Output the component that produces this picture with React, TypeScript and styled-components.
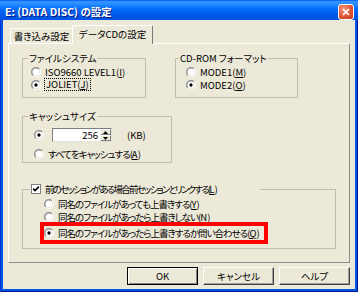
import React from "react";
import styled, { createGlobalStyle } from "styled-components";

const Global = createGlobalStyle`
  html, body { margin: 0; padding: 0; background: #ffffff; }
  body {
    font-family: "Noto Sans CJK JP", "Liberation Sans", sans-serif;
    font-feature-settings: "palt";
    color: #000;
  }
`;

const Window = styled.div`
  width: 358px;
  height: 292px;
  display: flex;
  flex-direction: column;
  background: #0055e5;
  overflow: hidden;
`;

const TitleBar = styled.div`
  height: 20px;
  flex: none;
  display: flex;
  align-items: center;
  justify-content: space-between;
  padding: 0 4px 0 5px;
  background: linear-gradient(
    #0058ee 0%,
    #3593ff 8%,
    #288eff 20%,
    #127dff 32%,
    #036ffc 45%,
    #0262ee 60%,
    #0057e5 75%,
    #0054e3 100%
  );
`;

const TitleText = styled.span`
  color: #fff;
  font-weight: bold;
  font-size: 10.5px;
  line-height: 12px;
  padding-top: 3px;
  text-shadow: 1px 1px #0a1883;
`;

const CloseButton = styled.div`
  width: 16px;
  height: 16px;
  box-sizing: border-box;
  margin-top: 3px;
  border: 1px solid #fff;
  border-radius: 3px;
  background: radial-gradient(circle at 35% 30%, #f39b82 0%, #e35d3d 45%, #c13b19 100%);
  display: flex;
  align-items: center;
  justify-content: center;
`;

const Frame = styled.div`
  flex: 1;
  display: flex;
  padding: 0 3px 3px 3px;
  box-shadow: inset 1px 0 #0831d9, inset -1px 0 #00138c, inset 0 -1px #00138c;
`;

const Body = styled.div`
  flex: 1;
  display: flex;
  flex-direction: column;
  background: #ece9d8;
  padding: 5px 5px 0 5px;
`;

const TabRow = styled.div`
  height: 18px;
  display: flex;
  align-items: flex-end;
  padding-left: 2px;
`;

const Tab = styled.div<{ $active?: boolean }>`
  box-sizing: border-box;
  width: ${(p) => (p.$active ? 81 : 63)}px;
  height: ${(p) => (p.$active ? 19 : 15)}px;
  margin-left: ${(p) => (p.$active ? -1 : 0)}px;
  margin-bottom: ${(p) => (p.$active ? -1 : 0)}px;
  position: relative;
  z-index: ${(p) => (p.$active ? 2 : 0)};
  background: #ece9d8;
  border-top: 1px solid #fff;
  border-left: 1px solid #fff;
  border-right: 1px solid ${(p) => (p.$active ? "#7a7a7a" : "#a0a0a0")};
  border-radius: 2px 2px 0 0;
  font-size: 9.5px;
  line-height: 12px;
  display: flex;
  justify-content: center;
  align-items: ${(p) => (p.$active ? "center" : "flex-end")};
  padding-bottom: ${(p) => (p.$active ? 2 : 1)}px;
`;

const Panel = styled.div`
  box-sizing: border-box;
  height: 220px;
  position: relative;
  z-index: 1;
  border: 1px solid;
  border-color: #fff #8c8c8c #8c8c8c #fff;
  padding: 8px 0 0 13px;
  display: flex;
  flex-direction: column;
`;

const GroupRow = styled.div`
  display: flex;
  gap: 29px;
`;

const Group = styled.fieldset<{ $w: number; $mt?: number }>`
  box-sizing: border-box;
  width: ${(p) => p.$w}px;
  min-width: 0;
  margin: ${(p) => p.$mt ?? 0}px 0 0 0;
  padding: 0;
  border: 1px solid #bdbdb1;
`;

const Legend = styled.legend<{ $ml: number; $w?: number }>`
  margin-left: ${(p) => p.$ml}px;
  padding: 0 1px;
  height: 12px;
  ${(p) => (p.$w ? `width: ${p.$w}px; box-sizing: border-box;` : "")}
  font-size: 9.5px;
  line-height: 12px;
  white-space: nowrap;
  display: flex;
  align-items: center;
  gap: 4px;
`;

const Content = styled.div<{ $pt: number; $pb: number; $pl: number; $gap?: number }>`
  display: flex;
  flex-direction: column;
  gap: ${(p) => p.$gap ?? 0}px;
  padding: ${(p) => p.$pt}px 0 ${(p) => p.$pb}px ${(p) => p.$pl}px;
`;

const OptionRow = styled.div<{ $gap?: number; $h?: number }>`
  display: flex;
  align-items: center;
  height: ${(p) => p.$h ?? 13}px;
  gap: ${(p) => p.$gap ?? 4}px;
  font-size: 9.5px;
  line-height: 12px;
  white-space: nowrap;
`;

const Jp = styled.span<{ $ls?: number }>`
  letter-spacing: ${(p) => p.$ls ?? -1}px;
  & u {
    letter-spacing: 0;
  }
`;

const Focus = styled.span`
  outline: 1px dotted #000;
  outline-offset: 0;
  padding: 0 1px;
  line-height: 11px;
`;

const SpinBox = styled.div`
  display: flex;
  width: 60px;
  height: 14px;
  box-sizing: border-box;
  border: 1px solid;
  border-color: #7f7f7f #e4e2d8 #e4e2d8 #7f7f7f;
  background: #fff;
`;

const SpinField = styled.div`
  flex: 1;
  text-align: right;
  padding-right: 2px;
  font-size: 9.5px;
  line-height: 12px;
`;

const SpinButtons = styled.div`
  width: 11px;
  display: flex;
  flex-direction: column;
`;

const SpinHalf = styled.div`
  flex: 1;
  box-sizing: border-box;
  background: #ece9d8;
  border: 1px solid;
  border-color: #fff #808080 #808080 #fff;
  display: flex;
  align-items: center;
  justify-content: center;
`;

const Unit = styled.span`
  margin-left: 7px;
  font-size: 9.5px;
`;

const Highlight = styled.div`
  width: 228px;
  box-sizing: border-box;
  margin: -1px 0 0 -4px;
  border: 4px solid #ff0000;
  height: 22px;
  display: flex;
  align-items: center;
`;

const ButtonRow = styled.div`
  display: flex;
  justify-content: flex-end;
  gap: 5px;
  margin-top: 4px;
`;

const Button = styled.div<{ $default?: boolean }>`
  box-sizing: border-box;
  width: 71px;
  height: 18px;
  display: flex;
  align-items: center;
  justify-content: center;
  font-size: 9.5px;
  background: #ece9d8;
  border: 1px solid;
  border-color: ${(p) => (p.$default ? "#000" : "#fff #404040 #404040 #fff")};
  box-shadow: ${(p) =>
    p.$default ? "inset 1px 1px #fff, inset -1px -1px #808080" : "inset -1px -1px #a0a0a0"};
`;

const Radio = ({ on }: { on?: boolean }) => (
  <svg width="10" height="10" viewBox="0 0 12 12" style={{ flex: "none" }}>
    <defs>
      <linearGradient id="rOuter" x1="0" y1="0" x2="1" y2="1">
        <stop offset="0.5" stopColor="#8a8a8a" />
        <stop offset="0.5" stopColor="#ffffff" />
      </linearGradient>
      <linearGradient id="rInner" x1="0" y1="0" x2="1" y2="1">
        <stop offset="0.5" stopColor="#b0b0b0" />
        <stop offset="0.5" stopColor="#e4e2d8" />
      </linearGradient>
    </defs>
    <circle cx="6" cy="6" r="6" fill="url(#rOuter)" />
    <circle cx="6" cy="6" r="5" fill="url(#rInner)" />
    <circle cx="6" cy="6" r="4" fill="#fff" />
    {on && <circle cx="6" cy="6" r="2" fill="#000" />}
  </svg>
);

const Check = () => (
  <svg width="10" height="10" viewBox="0 0 10 10" style={{ flex: "none" }}>
    <rect x="0.5" y="0.5" width="9" height="9" fill="#fff" stroke="#808080" />
    <path d="M2.2 4.6 L4 6.6 L7.9 2.6" stroke="#000" strokeWidth="1.6" fill="none" />
  </svg>
);

const Arrow = ({ up }: { up?: boolean }) => (
  <svg width="5" height="3" viewBox="0 0 5 3">
    <path d={up ? "M0 3 L2.5 0 L5 3 Z" : "M0 0 L2.5 3 L5 0 Z"} fill="#000" />
  </svg>
);

export default function App() {
  return (
    <>
      <Global />
      <Window>
        <TitleBar>
          <TitleText>E: (DATA DISC) の設定</TitleText>
          <CloseButton>
            <svg width="8" height="8" viewBox="0 0 8 8">
              <path d="M1 1 L7 7 M7 1 L1 7" stroke="#fff" strokeWidth="1.7" />
            </svg>
          </CloseButton>
        </TitleBar>
        <Frame>
          <Body>
            <TabRow>
              <Tab>書き込み設定</Tab>
              <Tab $active>データCDの設定</Tab>
            </TabRow>
            <Panel>
              <GroupRow>
                <Group $w={124}>
                  <Legend $ml={5}>ファイルシステム</Legend>
                  <Content $pt={1} $pb={6} $pl={8}>
                    <OptionRow>
                      <Radio />
                      <span>ISO9660 LEVEL1(<u>I</u>)</span>
                    </OptionRow>
                    <OptionRow>
                      <Radio on />
                      <Focus>JOLIET(<u>J</u>)</Focus>
                    </OptionRow>
                  </Content>
                </Group>
                <Group $w={123}>
                  <Legend $ml={3}>CD-ROM フォーマット</Legend>
                  <Content $pt={1} $pb={6} $pl={10}>
                    <OptionRow>
                      <Radio />
                      <span>MODE1(<u>M</u>)</span>
                    </OptionRow>
                    <OptionRow>
                      <Radio on />
                      <span>MODE2(<u>O</u>)</span>
                    </OptionRow>
                  </Content>
                </Group>
              </GroupRow>
              <Group $w={150} $mt={12}>
                <Legend $ml={5}>キャッシュサイズ</Legend>
                <Content $pt={6} $pb={2} $pl={11} $gap={5}>
                  <OptionRow $gap={8} $h={14}>
                    <Radio on />
                    <SpinBox>
                      <SpinField>256</SpinField>
                      <SpinButtons>
                        <SpinHalf>
                          <Arrow up />
                        </SpinHalf>
                        <SpinHalf>
                          <Arrow />
                        </SpinHalf>
                      </SpinButtons>
                    </SpinBox>
                    <Unit>(KB)</Unit>
                  </OptionRow>
                  <OptionRow>
                    <Radio />
                    <Jp>すべてをキャッシュする(<u>A</u>)</Jp>
                  </OptionRow>
                </Content>
              </Group>
              <Group $w={314} $mt={20}>
                <Legend $ml={7} $w={230}>
                  <Check />
                  <Jp $ls={-1.8}>前のセッションがある場合前セッションとリンクする(<u>L</u>)</Jp>
                </Legend>
                <Content $pt={2} $pb={4} $pl={21}>
                  <OptionRow>
                    <Radio />
                    <Jp>同名のファイルがあっても上書きする(<u>Y</u>)</Jp>
                  </OptionRow>
                  <OptionRow>
                    <Radio />
                    <Jp>同名のファイルがあったら上書きしない(<u>N</u>)</Jp>
                  </OptionRow>
                  <Highlight>
                    <OptionRow>
                      <Radio on />
                      <Jp>同名のファイルがあったら上書きするか問い合わせる(<u>Q</u>)</Jp>
                    </OptionRow>
                  </Highlight>
                </Content>
              </Group>
            </Panel>
            <ButtonRow>
              <Button $default>OK</Button>
              <Button>キャンセル</Button>
              <Button>ヘルプ</Button>
            </ButtonRow>
          </Body>
        </Frame>
      </Window>
    </>
  );
}
